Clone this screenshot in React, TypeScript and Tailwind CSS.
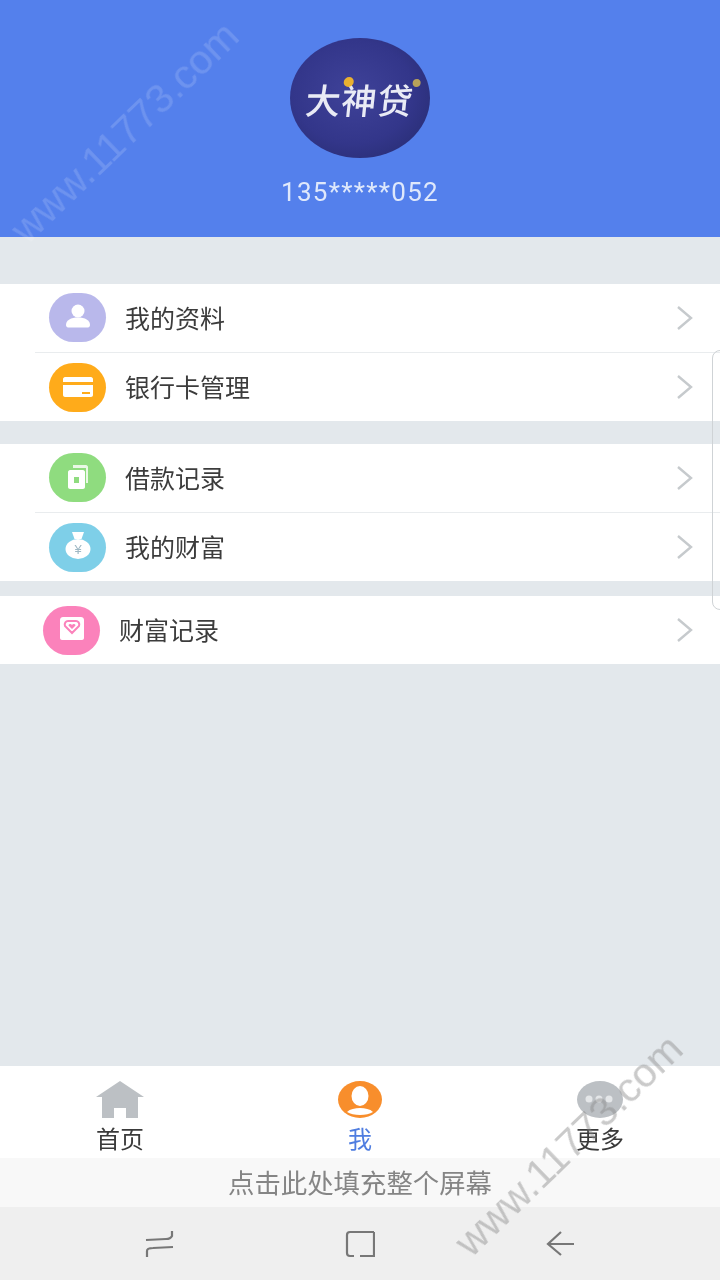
const cjk = "font-['Noto_Sans_CJK_SC','Noto_Sans',sans-serif]";

function Chevron() {
  return (
    <svg width="18" height="26" viewBox="0 0 18 26" fill="none" stroke="#c6cacd" strokeWidth="2.4" className="mr-[26px] blur-[0.5px]">
      <path d="M2 2l13 11L2 24" />
    </svg>
  );
}

function IconCircle({ color, children, offset, lift }: { color: string; children: React.ReactNode; offset?: boolean; lift?: boolean }) {
  return (
    <div
      className={`flex h-[49px] w-[57px] shrink-0 items-center justify-center rounded-full ${lift ? '-mt-[2px]' : ''} ${offset ? 'ml-[43px]' : 'ml-[49px]'}`}
      style={{ backgroundColor: color }}
    >
      <svg width="32" height="32" viewBox="0 0 32 32" fill="#fff" className="blur-[0.6px]">
        {children}
      </svg>
    </div>
  );
}

function Row({ color, label, icon, offset, divider, lift }: { color: string; label: string; icon: React.ReactNode; offset?: boolean; divider?: boolean; lift?: boolean }) {
  return (
    <div className="relative flex h-[68px] items-center">
      <IconCircle color={color} offset={offset} lift={lift}>{icon}</IconCircle>
      <span className={`-mt-[2px] ml-[19px] text-[25px] leading-none text-[#3c3c3c] blur-[0.5px] ${cjk}`}>{label}</span>
      <div className="flex-1" />
      <Chevron />
      {divider && <div className="absolute bottom-[-1px] left-[35px] right-0 h-px bg-[#e9ecee]" />}
    </div>
  );
}

const userIcon = (
  <>
    <circle cx="16" cy="10" r="6.5" />
    <path d="M4 24c0-5 5-7.500 12-7.500s12 2.500 12 7.500c0 1.500-1 2.500-2 2.500H6c-1 0-2-1-2-2.500z" />
  </>
);
const cardIcon = (
  <path fillRule="evenodd" d="M1 8c0-1 1-2 2-2h26c1 0 2 1 2 2v3H1zM1 14h30v10c0 1-1 2-2 2H3c-1 0-2-1-2-2zM20 21v2h8v-2z" />
);
const recordIcon = (
  <>
    <path d="M11 4h13c1 0 2 1 2 2v16h-2V7H11z" opacity=".8" />
    <path fillRule="evenodd" d="M8 9h13c1 0 2 1 2 2v15c0 1-1 2-2 2H8c-1 0-2-1-2-2V11c0-1 1-2 2-2zm4 7v6h5v-6z" />
  </>
);
const moneyIcon = (
  <>
    <path d="M10 1h12l-2.500 7h-7z" />
    <ellipse cx="16" cy="18" rx="12.500" ry="10" />
    <text x="16" y="23" textAnchor="middle" fontSize="13" fill="#9fb8c4" fontFamily="'Liberation Sans', sans-serif">¥</text>
  </>
);
const mailIcon = (
  <>
    <path d="M7 3h18c1.500 0 3 1 3 3v18c0 1-1 2-2 2H6c-1 0-2-1-2-2V6c0-2 1.500-3 3-3z" />
    <path d="M16 19l-7-7c-1-3 1-5 3-5h8c2 0 4 2 3 5z" fill="none" stroke="#fb82bb" strokeWidth="2" />
    <path d="M16 15l-3.500-3.500c0-1.500 2.500-2 3.500-.5 1-1.500 3.500-1 3.500.5z" fill="#fb82bb" />
  </>
);

function Watermark({ className }: { className: string }) {
  return (
    <div className={`pointer-events-none absolute -rotate-[44deg] whitespace-nowrap font-['Liberation_Sans',sans-serif] text-[41px] leading-none blur-[0.7px] ${className}`}>
      www.11773.com
    </div>
  );
}

function TabLabel({ children, active }: { children: React.ReactNode; active?: boolean }) {
  return (
    <span className={`text-[24px] leading-none blur-[0.5px] ${cjk} ${active ? 'text-[#4f7de0]' : 'text-[#3a3a3a]'}`}>{children}</span>
  );
}

export default function App() {
  return (
    <div className="relative flex h-[1280px] w-[720px] flex-col overflow-hidden bg-[#e3e8ec]">
      {/* Header */}
      <header className="flex h-[237px] shrink-0 flex-col items-center bg-[#5480ec] pt-[38px]">
        <div className="flex h-[120px] w-[140px] items-center justify-center rounded-[50%] bg-[radial-gradient(ellipse_at_45%_45%,#3f4299_0%,#33368a_55%,#23296a_100%)] blur-[0.6px]">
          <span className={`relative mt-[1px] -skew-x-6 text-[35px] font-medium leading-none tracking-[1px] text-[#e9ebf5] ${cjk}`}>
            大神贷
            <span className="absolute left-[36px] top-[-4px] h-[10px] w-[10px] rounded-full bg-[#e9b030]" />
            <span className="absolute right-[-5px] top-[-2px] h-[8px] w-[8px] rounded-full bg-[#b9a25a]" />
          </span>
        </div>
        <div className="mt-[19px] font-['Roboto',sans-serif] text-[26px] leading-[30px] tracking-[1.3px] text-[#dfe8fb] blur-[0.5px]">
          135*****052
        </div>
      </header>

      {/* Menu groups */}
      <section className="mt-[47px] bg-white">
        <Row color="#b9b8eb" label="我的资料" icon={userIcon} divider lift />
        <div className="h-px" />
        <Row color="#ffab1a" label="银行卡管理" icon={cardIcon} />
      </section>
      <section className="mt-[23px] bg-white">
        <Row color="#8fdc7f" label="借款记录" icon={recordIcon} divider lift />
        <div className="h-px" />
        <Row color="#7ecfe8" label="我的财富" icon={moneyIcon} />
      </section>
      <section className="mt-[15px] bg-white">
        <Row color="#fb82bb" label="财富记录" icon={mailIcon} offset />
      </section>

      <div className="flex-1" />

      {/* Tab bar */}
      <nav className="grid h-[92px] shrink-0 grid-cols-3 bg-white">
        <div className="flex flex-col items-center pt-[15px]">
          <svg width="50" height="37" viewBox="0 0 50 37" fill="#bcc0c4" className="blur-[0.4px]">
            <path d="M25 0L49 16h-6v21H31V27H19v10H7V16H1z" />
          </svg>
          <div className="mt-[8px]"><TabLabel>首页</TabLabel></div>
        </div>
        <div className="flex flex-col items-center pt-[15px]">
          <svg width="44" height="37" viewBox="0 0 44 37" className="blur-[0.4px]">
            <ellipse cx="22" cy="18.500" rx="22" ry="18.500" fill="#f88e2c" />
            <ellipse cx="22" cy="15" rx="8.500" ry="10" fill="#fff" />
            <path d="M9 31c3-3 8-4 13-4s10 1 13 4c-3 2-8 3-13 3s-10-1-13-3z" fill="#fff" />
          </svg>
          <div className="mt-[8px]"><TabLabel active>我</TabLabel></div>
        </div>
        <div className="flex flex-col items-center pt-[15px]">
          <svg width="46" height="37" viewBox="0 0 46 37" className="blur-[0.4px]">
            <ellipse cx="23" cy="18.500" rx="23" ry="18.500" fill="#bcc0c4" />
            <circle cx="12" cy="18" r="3.500" fill="#e4e6e8" />
            <circle cx="22" cy="18" r="3.500" fill="#e4e6e8" />
            <circle cx="32" cy="18" r="3.500" fill="#e4e6e8" />
          </svg>
          <div className="mt-[8px]"><TabLabel>更多</TabLabel></div>
        </div>
      </nav>

      {/* Fill-screen hint */}
      <div className={`flex h-[49px] shrink-0 items-center justify-center bg-[#f8f8f8] text-[26.400px] leading-none text-[#858585] blur-[0.5px] ${cjk}`}>
        点击此处填充整个屏幕
      </div>

      {/* System nav */}
      <div className="grid h-[73px] shrink-0 grid-cols-3 items-center bg-[#efefef] px-[60px]">
        <div className="flex justify-center">
          <svg width="30" height="28" viewBox="0 0 30 28" fill="none" stroke="#777" strokeWidth="2.200" className="blur-[0.4px]">
            <path d="M1 10l20-1c3 0 5-1 6-3V1M28 17L8 18c-3 0-6 1-6 3v6" />
          </svg>
        </div>
        <div className="flex justify-center">
          <svg width="30" height="28" viewBox="0 0 30 28" fill="none" stroke="#777" strokeWidth="2.200" className="blur-[0.4px]">
            <path d="M29 2H5C3 2 2 3 2 5v18c0 2 1 3 3 3h4M29 2v24H15" />
          </svg>
        </div>
        <div className="flex justify-center">
          <svg width="30" height="28" viewBox="0 0 30 28" fill="none" stroke="#777" strokeWidth="2.200" className="blur-[0.4px]">
            <path d="M29 14H3M16 2L3 14l13 11" />
          </svg>
        </div>
      </div>

      {/* Overlays */}
      <div className="absolute right-[-10px] top-[350px] h-[260px] w-[18px] rounded-[8px] border border-[#cfd3d6]" />
      <Watermark className="left-[-24px] top-[112px] text-white/15" />
      <Watermark className="left-[420px] top-[1125px] text-[#8a8a8a]/45" />
    </div>
  );
}
